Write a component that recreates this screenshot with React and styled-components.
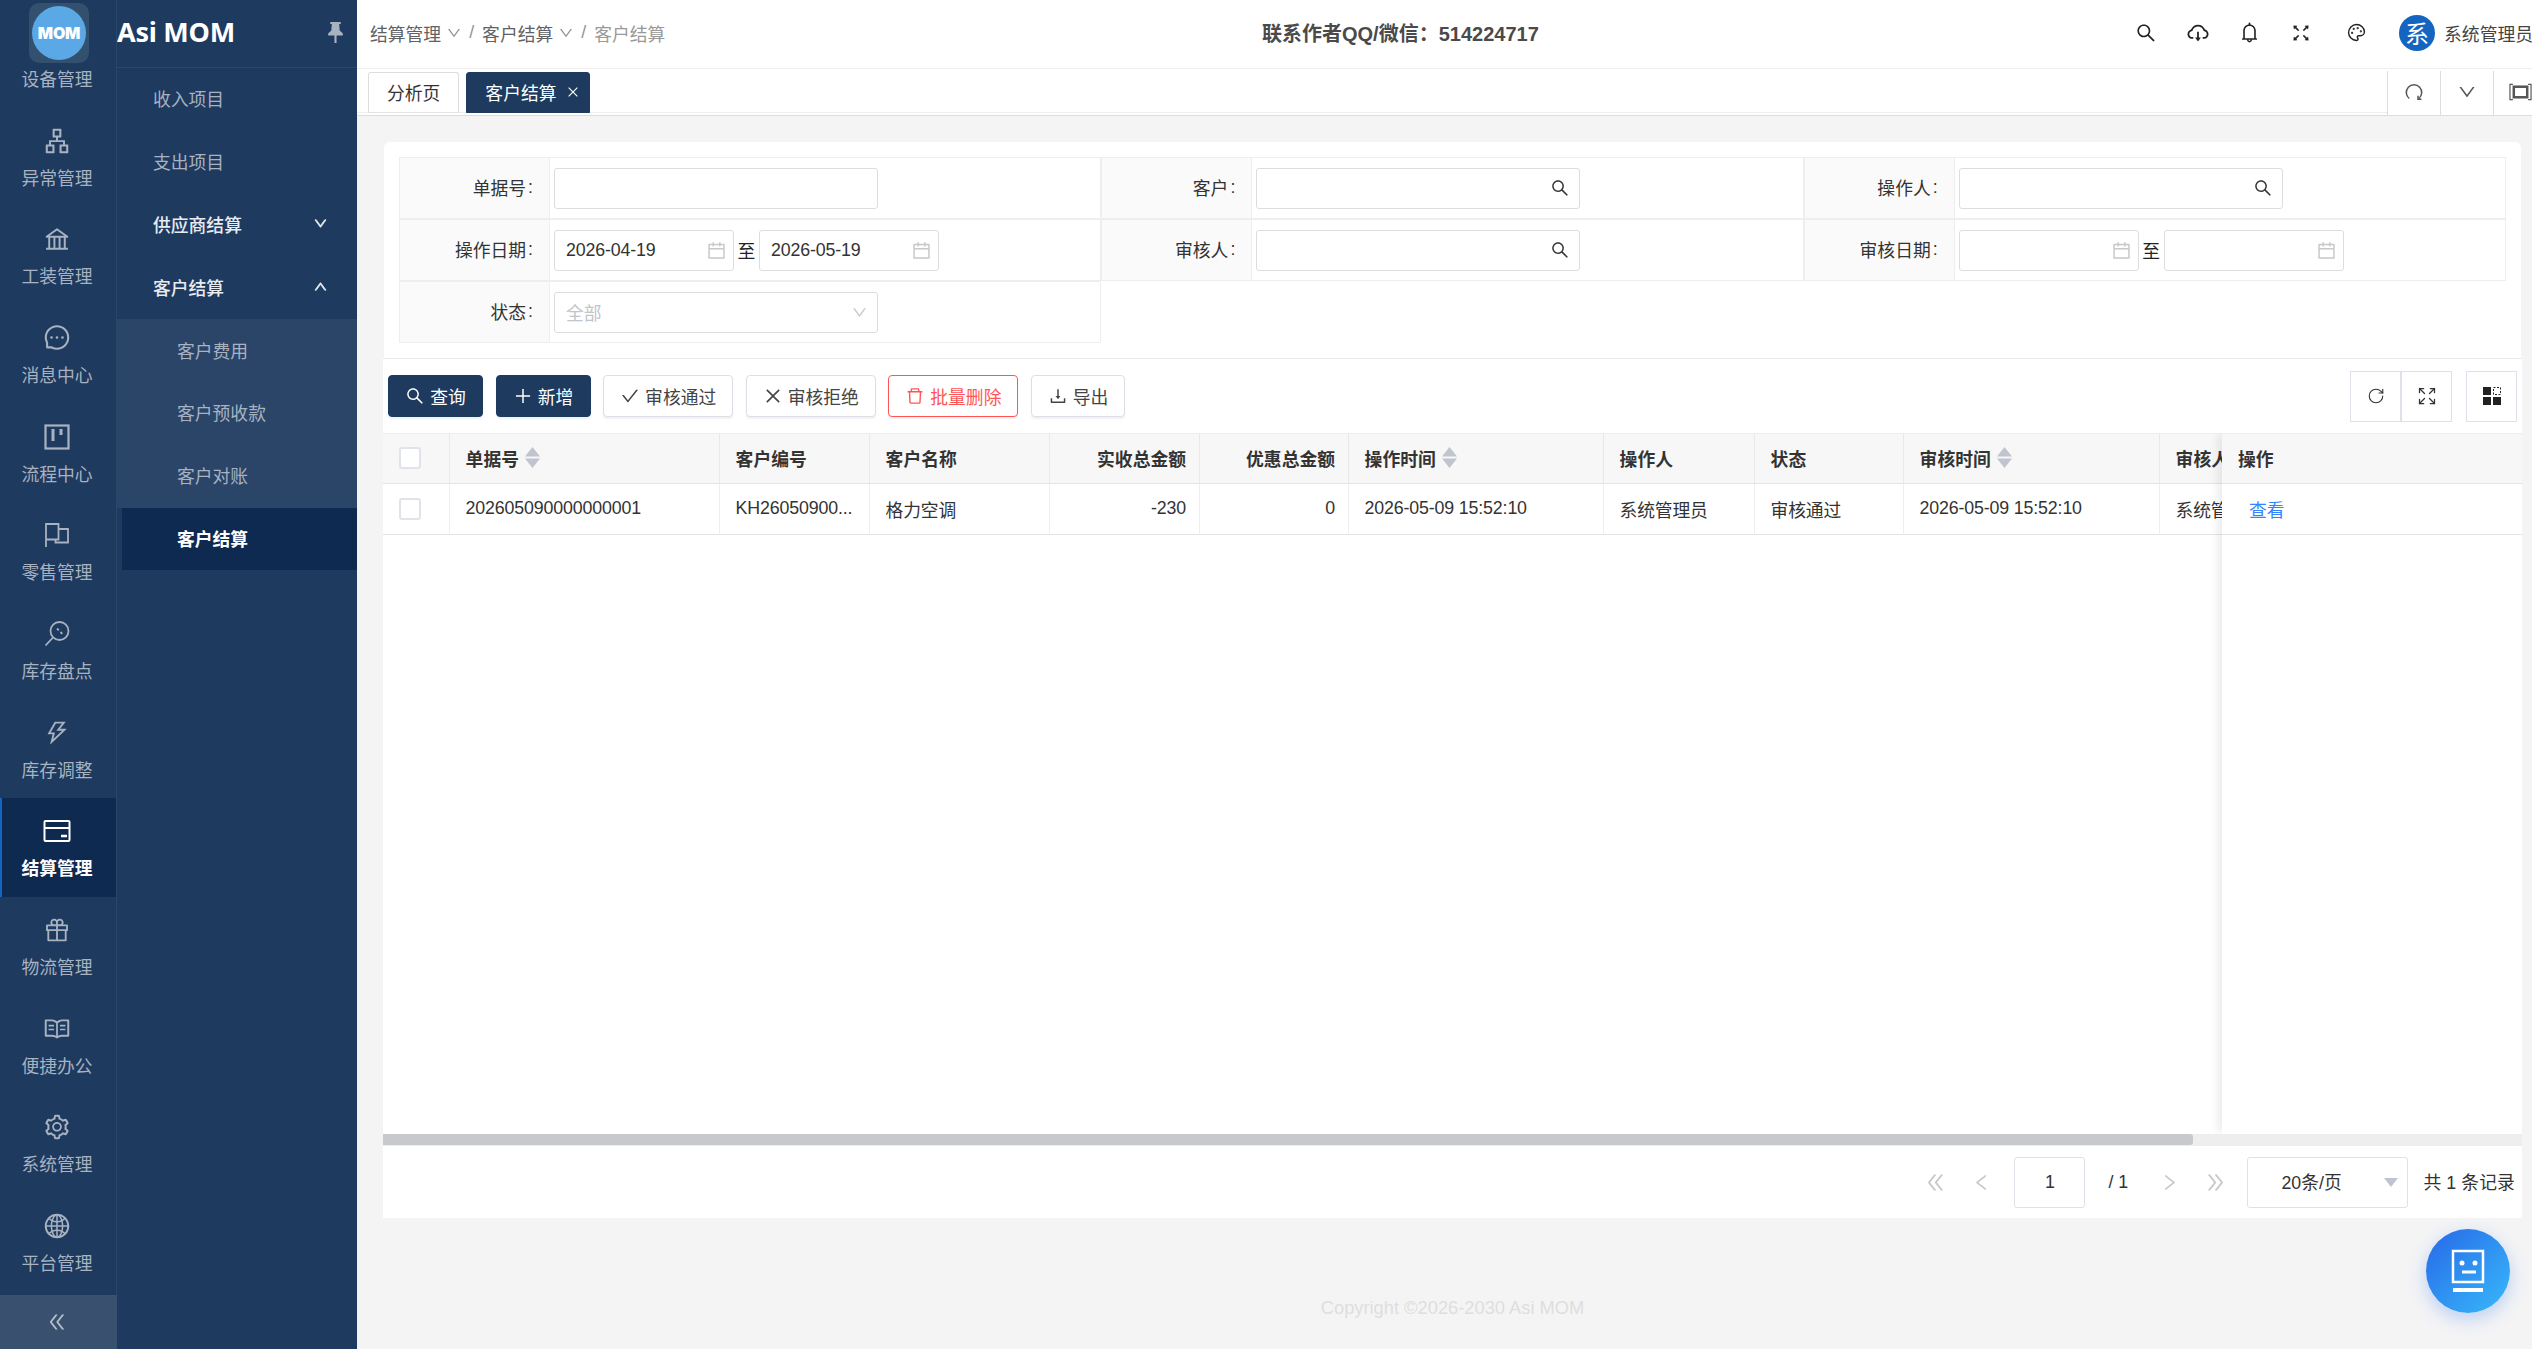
import React from 'react';
import styled, { createGlobalStyle } from 'styled-components';
import {
  AiOutlineApartment, AiOutlineBank, AiOutlineMessage, AiOutlineThunderbolt, AiOutlineGift, AiOutlineRead,
  AiOutlineSetting, AiOutlineGlobal, AiOutlineDoubleLeft, AiOutlineDoubleRight, AiOutlineDown, AiOutlineUp,
  AiOutlineSearch, AiOutlineCloudDownload, AiOutlineBell, AiOutlineFullscreen, AiOutlineCalendar, AiOutlineClose,
  AiOutlineCheck, AiOutlinePlus, AiOutlineDelete, AiOutlineDownload, AiOutlineLeft, AiOutlineRight,
} from 'react-icons/ai';
import { Palette, Expand, RotateCw } from 'lucide-react';

const Global = createGlobalStyle`
  html, body { margin: 0; padding: 0; height: 100%; overflow: hidden; }
  body { font-family: "Liberation Sans", "Noto Sans CJK SC", sans-serif; font-size: 17.8px; color: #333; }
  * { box-sizing: border-box; }
`;

const Page = styled.div`
  display: flex; width: 2532px; height: 1349px; overflow: hidden; position: relative; background: #f4f4f5;
`;

/* ---------- sidebar ---------- */
const Sidebar = styled.aside`
  flex: 0 0 357px; display: flex; background: #1e3a5f; position: relative;
`;
const Rail = styled.nav`
  flex: 0 0 117px; display: flex; flex-direction: column; padding-top: 9px; position: relative;
  border-right: 1px solid #2a4669;
`;
const LogoBox = styled.div`
  position: absolute; left: 29px; top: 3px; width: 60px; height: 60px; border-radius: 10px;
  background: #34506f; display: flex; align-items: center; justify-content: center; z-index: 2;
`;
const LogoCircle = styled.div`
  width: 54px; height: 54px; border-radius: 50%; background: #5aa9e6; color: #fff;
  display: flex; align-items: center; justify-content: center;
  font-family: Inter, sans-serif; font-weight: 900; font-size: 16px; letter-spacing: -0.2px;
`;
const RailItem = styled.div`
  height: 98.67px; flex: 0 0 98.67px; display: flex; flex-direction: column; align-items: center; padding-top: 19px;
  color: ${p => (p.$active ? '#fff' : '#a8b2c0')};
  font-weight: ${p => (p.$active ? 700 : 400)};
  background: ${p => (p.$active ? '#0f2a50' : 'transparent')};
  border-left: 2px solid ${p => (p.$active ? '#1565c0' : 'transparent')};
`;
const RailIcon = styled.div`
  width: 28px; height: 28px; display: flex; align-items: center; justify-content: center; margin-left: -4px;
`;
const RailLabel = styled.div`
  margin-top: 12px; line-height: 24px; white-space: nowrap; margin-left: -4px;
`;
const Collapse = styled.div`
  position: absolute; left: 0; bottom: 0; width: 117px; height: 54px; background: #3a506f; color: #b6c0cc;
  display: flex; align-items: center; justify-content: center; padding-right: 3px;
`;
const SubPanel = styled.div`
  flex: 1; display: flex; flex-direction: column; min-width: 0;
`;
const SubHead = styled.div`
  height: 68px; flex: 0 0 68px; display: flex; align-items: center; justify-content: space-between;
  padding: 0 14px 0 0; border-bottom: 1px solid #2a4669; color: #fff;
`;
const Brand = styled.div`
  font-size: 27px; font-weight: 700; line-height: 1; margin-top: -4px; color: #fff; font-family: "Noto Sans", sans-serif; letter-spacing: -0.25px;
`;
const PinIcon = styled.div`
  color: #a8b2c0; display: flex; margin-top: -2px;
`;
const SubItem = styled.div`
  height: 62.8px; flex: 0 0 62.8px; display: flex; align-items: center; justify-content: space-between; padding-right: 29px; padding-bottom: 2px;
  padding-left: ${p => (p.$level === 2 ? (p.$active ? 55 : 60) : 36)}px;
  margin-left: ${p => (p.$active ? 5 : 0)}px;
  color: ${p => (p.$active ? '#fff' : p.$open ? '#e8ebf0' : '#a8b2c0')};
  font-weight: ${p => (p.$active ? 700 : p.$open ? 500 : 400)};
  background: ${p => (p.$active ? '#0f2a50' : p.$level === 2 ? '#2b4569' : 'transparent')};
`;

/* ---------- main ---------- */
const Main = styled.main`
  flex: 1; min-width: 0; display: flex; flex-direction: column; height: 1349px; overflow: hidden;
`;
const Header = styled.header`
  flex: 0 0 69px; height: 69px; background: #fff; border-bottom: 1px solid #eee; display: flex; align-items: center; overflow: hidden;
  padding-left: 13px; padding-bottom: 3px;
`;
const Crumbs = styled.div`
  flex: 0 0 892px; display: flex; align-items: center; color: #606266; white-space: nowrap;
`;
const CrumbChevron = styled.span`
  display: inline-flex; margin: 0 7px 0 5px; color: #909399;
`;
const CrumbSep = styled.span`
  margin-right: 8px; color: #909399;
`;
const CrumbLast = styled.span`color: #999;`;
const Notice = styled.div`
  font-weight: 700; font-size: 20px; color: #4a4a4a; white-space: nowrap;
`;
const HeadTools = styled.div`
  margin-left: auto; display: flex; align-items: center;
`;
const HeadIcon = styled.div`
  width: 51.5px; height: 30px; display: flex; align-items: center; justify-content: center; color: #222;
  margin-right: ${p => p.$mr || 0}px;
`;
const Avatar = styled.div`
  width: 36px; height: 36px; border-radius: 50%; background: #1565c0; color: #fff; font-size: 24px;
  display: flex; align-items: center; justify-content: center; margin-left: 17px; margin-right: 9px; flex: none;
`;
const UserName = styled.div`color: #444; white-space: nowrap; margin-right: -1px;`;

const TabBar = styled.div`
  flex: 0 0 47px; height: 47px; background: #fff; border-bottom: 1px solid #ddd; display: flex;
`;
const TabStrip = styled.div`
  flex: 1; display: flex; gap: 7px; padding: 3px 0 0 11px; border-bottom: 1px solid #eee; height: 44px;
`;
const Tab = styled.div`
  height: 41px; display: flex; align-items: center; gap: 9px; padding: ${p => (p.$active ? '0 9px 2px 18px' : '0 18px 2px')};
  border: 1px solid ${p => (p.$active ? '#1e3a5f' : '#ddd')}; border-bottom-color: ${p => (p.$active ? '#1e3a5f' : '#e4e4e4')};
  border-radius: 3px 3px 0 0;
  background: ${p => (p.$active ? '#1e3a5f' : '#fff')}; color: ${p => (p.$active ? '#fff' : '#333')};
`;
const TabTool = styled.div`
  margin-top: 2px; border-left: 1px solid #ddd; display: flex; align-items: center; justify-content: ${p => (p.$start ? 'flex-start' : 'center')};
  padding-left: ${p => (p.$start ? 15 : 0)}px; color: #555; padding-bottom: 2px; overflow: hidden;
  flex: 0 0 ${p => p.$w || 53}px;
`;

const Content = styled.div`
  flex: 1; display: flex; flex-direction: column; padding: 26px 10px 0 26px; min-height: 0; background: #f4f4f5;
`;
const SearchCard = styled.section`
  flex: 0 0 216px; margin: 0 1px 0 1px; background: #fff; border-radius: 6px 6px 0 0; border-bottom: 1px solid #e8e8e8; padding: 15px;
`;
const FormGrid = styled.div`
  display: grid; grid-template-columns: repeat(3, 1fr); grid-auto-rows: 62px;
`;
const Field = styled.div`
  display: grid; grid-template-columns: 150px 1fr; border: 1px solid #eee;
`;
const FieldLabel = styled.div`
  background: #fafafa; border-right: 1px solid #eee; display: flex; align-items: center; justify-content: flex-end; padding: 0 16px 2px 0; color: #333;
`;
const Colon = styled.span`margin-left: 2px;`;
const FieldValue = styled.div`
  display: flex; align-items: center; padding-left: 4px;
`;
const InputBox = styled.div`
  width: ${p => p.$w || 324}px; height: 41px; border: 1px solid #ddd; border-radius: 3px; background: #fff; display: flex; align-items: center;
  justify-content: space-between; padding: 0 9px 0 11px; color: ${p => (p.$muted ? '#c0c4cc' : '#333')}; flex: none; letter-spacing: -0.15px;
`;
const FieldIcon = styled.span`
  display: inline-flex; color: ${p => p.$c || '#c8c8c8'}; margin-right: ${p => p.$mr || 0}px;
`;
const To = styled.span`
  width: 25px; text-align: center; flex: none; color: #222; padding-bottom: 1px;
`;

const TableCard = styled.section`
  flex: 0 0 859px; background: #fff; display: flex; flex-direction: column;
`;
const Toolbar = styled.div`
  flex: 0 0 74px; display: flex; align-items: center; padding: 0 5px 0 5px;
`;
const Btn = styled.div`
  width: ${p => p.$w}px; height: 42px; border-radius: 4px; display: flex; align-items: center; justify-content: center; gap: 5px; margin-right: 12.6px; padding-bottom: 1px;
  background: ${p => (p.$primary ? '#1e3a5f' : '#fff')};
  color: ${p => (p.$primary ? '#fff' : p.$danger ? '#ff5558' : '#444')};
  border: 1px solid ${p => (p.$primary ? '#1e3a5f' : p.$danger ? '#ff5558' : '#dcdfe6')};
  box-shadow: 0 2px 2px ${p => (p.$primary ? 'rgba(64,158,255,.12)' : 'rgba(0,0,0,.06)')};
`;
const Tools = styled.div`
  margin-left: auto; display: flex;
`;
const ToolBtn = styled.div`
  width: 51px; height: 51px; border: 1px solid #dfe1ea; display: flex; align-items: center; justify-content: center; color: #333;
  margin-left: ${p => p.$ml || 0}px;
`;
const TableArea = styled.div`
  flex: 1; min-height: 0; position: relative; overflow: hidden;
`;
const Table = styled.table`
  border-collapse: separate; border-spacing: 0; table-layout: fixed; width: 2460px;
`;
const Col = styled.col`width: ${p => p.$w}px;`;
const Th = styled.th`
  height: 51px; padding: 0 13px 2px 15.6px; background: #f7f7f7; border-top: 1px solid #eee; border-right: 1px solid #e9e9e9; border-bottom: 1px solid #e4e4e4;
  text-align: ${p => p.$align || 'left'}; font-weight: 700; color: #333; white-space: nowrap; overflow: hidden;
`;
const Td = styled.td`
  height: 51px; padding: 0 13px 1px 15.6px; border-right: 1px solid #eee; border-bottom: 1px solid #e4e4e4; color: #333;
  text-align: ${p => p.$align || 'left'}; white-space: nowrap; overflow: hidden; letter-spacing: -0.15px;
`;
const Check = styled.span`
  display: block; width: 22px; height: 22px; border: 2px solid #e0e3ea; border-radius: 3px; background: #fff; margin-bottom: -1px;
`;
const HeadWrap = styled.span`
  display: inline-flex; align-items: center; gap: 6px;
`;
const FixedCol = styled.div`
  position: absolute; top: 0; right: 0; bottom: 0; width: 300px; background: #fff; box-shadow: -7px 0 8px -2px rgba(0,0,0,.07);
`;
const FixedHead = styled.div`
  height: 51px; background: #f7f7f7; border-top: 1px solid #eee; border-bottom: 1px solid #e4e4e4; display: flex; align-items: center; padding: 0 0 2px 16px; font-weight: 700; color: #333;
`;
const FixedCell = styled.div`
  height: 51px; border-bottom: 1px solid #e4e4e4; display: flex; align-items: center; padding: 0 0 1px 27px; color: #3385ff;
`;
const ScrollTrack = styled.div`
  flex: 0 0 11px; background: #eee; display: flex;
`;
const ScrollThumb = styled.div`
  width: 1810px; background: #c8c9cc; border-radius: 0 3px 3px 0;
`;
const Pager = styled.div`
  flex: 0 0 73px; border-top: 1px solid #eee; display: flex; align-items: center; justify-content: flex-end; padding-right: 7px; color: #333;
`;
const PageArrow = styled.span`
  width: 46px; display: flex; justify-content: center; color: #c8c8c8;
`;
const PageInput = styled.div`
  width: 71px; height: 51px; border: 1px solid #dfe1ea; border-radius: 3px; display: flex; align-items: center; justify-content: center; margin-left: 10px;
`;
const PageTotal = styled.span`
  width: 20px; margin: 0 18px 0 23px; white-space: nowrap;
`;
const PageSelect = styled.div`
  width: 161px; height: 51px; border: 1px solid #dfe1ea; border-radius: 3px; display: flex; align-items: center; padding: 0 0 2px 33px; position: relative; margin-left: 9px;
`;
const Caret = styled.span`
  position: absolute; right: 9px; top: 20px; width: 0; height: 0; border-left: 7px solid transparent; border-right: 7px solid transparent; border-top: 9px solid #c0c4cf;
`;
const PageCount = styled.span`
  margin: 0 0 2px 15px; white-space: nowrap; letter-spacing: 0.1px;
`;
const Footer = styled.footer`
  flex: 1; padding-top: 78px; line-height: 24px; text-align: center; color: #dedede; font-size: 18.3px;
`;
const FloatBtn = styled.div`
  position: absolute; right: 22px; bottom: 36px; width: 84px; height: 84px; border-radius: 50%;
  background: linear-gradient(135deg, #2768e8, #38bafa); box-shadow: 0 6px 18px rgba(50,120,240,.3);
  display: flex; align-items: center; justify-content: center; z-index: 5;
`;

/* ---------- drawn icons ---------- */
const line = { fill: 'none', stroke: 'currentColor', strokeWidth: 1.8 };
const FlagIcon = () => (
  <svg width="26" height="26" viewBox="0 0 26 26" {...line}><path d="M2 25V2h12.500v15.500H2" /><path d="M14.500 7H24v13.500H11.500v-3" /></svg>
);
const ProjectIcon = () => (
  <svg width="26" height="26" viewBox="0 0 26 26" {...line}><rect x="1.500" y="1.500" width="23" height="23" strokeWidth="2.200" /><path d="M9 5v12M17 5v6" strokeWidth="3" /></svg>
);
const ScanIcon = () => (
  <svg width="26" height="26" viewBox="0 0 26 26" {...line}><circle cx="15.500" cy="10" r="9" /><path d="M9 16.500L1.500 24.500" /><path d="M13 7.500l1.800 1.800M16.500 11l1.800 1.800" /></svg>
);
const CardIcon = () => (
  <svg width="28" height="22" viewBox="0 0 28 22" fill="none" stroke="currentColor" strokeWidth="2"><rect x="1.500" y="1" width="25" height="20" rx="1" /><path d="M1.500 8h25" /><path d="M18 16h6" strokeWidth="2.500" /></svg>
);
const PinGlyph = () => (
  <svg width="15" height="21" viewBox="0 0 14 20" fill="currentColor"><path d="M2 0h10v1.800h-1.500L11 8l3 3v1.800H8V20H6v-7.200H0V11l3-3 .5-6.200H2z" /></svg>
);
const ArcReload = () => (
  <svg width="18" height="18" viewBox="0 0 18 18" fill="none" stroke="currentColor" strokeWidth="1.500"><path d="M4.200 15.500A7.700 7.700 0 1 1 13.800 15.500" /><path d="M13 12.800v3.400h3.400" /></svg>
);
const MaxIcon = () => (
  <svg width="24" height="18" viewBox="0 0 24 18" fill="none" stroke="currentColor" strokeWidth="1.200"><path d="M4 1H1v16h3M20 1h3v16h-3" /><rect x="5" y="3.500" width="14" height="11" strokeWidth="2.600" /></svg>
);
const GridIcon = () => (
  <svg width="18" height="18" viewBox="0 0 18 18"><path fill="#222" d="M0 0h8v8H0zM0 10h8v8H0zM10 10h8v8h-8z" /><rect x="10.500" y=".500" width="7" height="7" fill="none" stroke="#222" strokeDasharray="2 1.500" /></svg>
);
const SortIcon = () => (
  <svg width="15" height="21" viewBox="0 0 15 21"><path fill="#c0c4cf" d="M7.500 0L15 9.500H0zM0 11.500h15L7.500 21z" /></svg>
);
const BotIcon = () => (
  <svg width="36" height="44" viewBox="0 0 36 44" fill="none" stroke="#fff" strokeWidth="2.500"><rect x="3" y="2" width="30" height="31" /><path d="M3 41h30" strokeWidth="4" /><circle cx="12" cy="14" r="2.500" fill="#fff" stroke="none" /><circle cx="25" cy="14" r="2.500" fill="#fff" stroke="none" /><path d="M12 23h14" strokeWidth="3" /></svg>
);

const railItems = [
  ['设备管理', <AiOutlineSetting size={26} />],
  ['异常管理', <AiOutlineApartment size={28} />],
  ['工装管理', <AiOutlineBank size={28} />],
  ['消息中心', <AiOutlineMessage size={29} />],
  ['流程中心', <ProjectIcon />],
  ['零售管理', <FlagIcon />],
  ['库存盘点', <ScanIcon />],
  ['库存调整', <AiOutlineThunderbolt size={28} />],
  ['结算管理', <CardIcon />, true],
  ['物流管理', <AiOutlineGift size={28} />],
  ['便捷办公', <AiOutlineRead size={30} />],
  ['系统管理', <AiOutlineSetting size={30} />],
  ['平台管理', <AiOutlineGlobal size={30} />],
];

const columns = [
  { w: 67 }, { w: 270, t: '单据号', sort: true, v: '202605090000000001' },
  { w: 150, t: '客户编号', v: 'KH26050900...' }, { w: 180, t: '客户名称', v: '格力空调' },
  { w: 150, t: '实收总金额', v: '-230', a: 'right' }, { w: 149, t: '优惠总金额', v: '0', a: 'right' },
  { w: 255, t: '操作时间', sort: true, v: '2026-05-09 15:52:10' }, { w: 151, t: '操作人', v: '系统管理员' },
  { w: 149, t: '状态', v: '审核通过' }, { w: 256, t: '审核时间', sort: true, v: '2026-05-09 15:52:10' },
  { w: 150, t: '审核人', v: '系统管理' }, { w: 533 },
];

const Search = () => <FieldIcon $c="#333"><AiOutlineSearch size={20} /></FieldIcon>;
const Cal = () => <FieldIcon $mr={-3}><AiOutlineCalendar size={21} /></FieldIcon>;

const Chevron = ({ up }) => {
  const Icon = up ? AiOutlineUp : AiOutlineDown;
  return <Icon size={15} stroke="currentColor" strokeWidth={50} />;
};

export default function App() {
  return (
    <Page>
      <Global />
      <Sidebar>
        <Rail>
          <LogoBox><LogoCircle>MOM</LogoCircle></LogoBox>
          {railItems.map(([label, icon, active]) => (
            <RailItem key={label} $active={active}>
              <RailIcon>{icon}</RailIcon>
              <RailLabel>{label}</RailLabel>
            </RailItem>
          ))}
          <Collapse><AiOutlineDoubleLeft size={22} /></Collapse>
        </Rail>
        <SubPanel>
          <SubHead>
            <Brand>Asi MOM</Brand>
            <PinIcon><PinGlyph /></PinIcon>
          </SubHead>
          <SubItem>收入项目</SubItem>
          <SubItem>支出项目</SubItem>
          <SubItem $open>供应商结算<Chevron /></SubItem>
          <SubItem $open>客户结算<Chevron up /></SubItem>
          <SubItem $level={2}>客户费用</SubItem>
          <SubItem $level={2}>客户预收款</SubItem>
          <SubItem $level={2}>客户对账</SubItem>
          <SubItem $level={2} $active>客户结算</SubItem>
        </SubPanel>
      </Sidebar>

      <Main>
        <Header>
          <Crumbs>
            结算管理<CrumbChevron><AiOutlineDown size={16} /></CrumbChevron><CrumbSep>/</CrumbSep>
            客户结算<CrumbChevron><AiOutlineDown size={16} /></CrumbChevron><CrumbSep>/</CrumbSep>
            <CrumbLast>客户结算</CrumbLast>
          </Crumbs>
          <Notice>联系作者QQ/微信：514224717</Notice>
          <HeadTools>
            <HeadIcon><AiOutlineSearch size={22} /></HeadIcon>
            <HeadIcon><AiOutlineCloudDownload size={24} /></HeadIcon>
            <HeadIcon><AiOutlineBell size={23} /></HeadIcon>
            <HeadIcon $mr={4}><AiOutlineFullscreen size={22} /></HeadIcon>
            <HeadIcon><Palette size={19} strokeWidth={1.8} /></HeadIcon>
            <Avatar>系</Avatar>
            <UserName>系统管理员</UserName>
          </HeadTools>
        </Header>
        <TabBar>
          <TabStrip>
            <Tab>分析页</Tab>
            <Tab $active>客户结算<AiOutlineClose size={14} /></Tab>
          </TabStrip>
          <TabTool><ArcReload /></TabTool>
          <TabTool><AiOutlineDown size={20} /></TabTool>
          <TabTool $start $w={39}><MaxIcon /></TabTool>
        </TabBar>
        <Content>
          <SearchCard>
            <FormGrid>
              <Field><FieldLabel>单据号<Colon>:</Colon></FieldLabel><FieldValue><InputBox /></FieldValue></Field>
              <Field><FieldLabel>客户<Colon>:</Colon></FieldLabel><FieldValue><InputBox><span /><Search /></InputBox></FieldValue></Field>
              <Field><FieldLabel>操作人<Colon>:</Colon></FieldLabel><FieldValue><InputBox><span /><Search /></InputBox></FieldValue></Field>
              <Field><FieldLabel>操作日期<Colon>:</Colon></FieldLabel><FieldValue>
                <InputBox $w={180}>2026-04-19<Cal /></InputBox><To>至</To><InputBox $w={180}>2026-05-19<Cal /></InputBox>
              </FieldValue></Field>
              <Field><FieldLabel>审核人<Colon>:</Colon></FieldLabel><FieldValue><InputBox><span /><Search /></InputBox></FieldValue></Field>
              <Field><FieldLabel>审核日期<Colon>:</Colon></FieldLabel><FieldValue>
                <InputBox $w={180}><span /><Cal /></InputBox><To>至</To><InputBox $w={180}><span /><Cal /></InputBox>
              </FieldValue></Field>
              <Field><FieldLabel>状态<Colon>:</Colon></FieldLabel><FieldValue>
                <InputBox $muted>全部<FieldIcon><AiOutlineDown size={17} /></FieldIcon></InputBox>
              </FieldValue></Field>
            </FormGrid>
          </SearchCard>
          <TableCard>
            <Toolbar>
              <Btn $primary $w={95}><AiOutlineSearch size={20} />查询</Btn>
              <Btn $primary $w={95}><AiOutlinePlus size={20} />新增</Btn>
              <Btn $w={130}><AiOutlineCheck size={20} />审核通过</Btn>
              <Btn $w={130}><AiOutlineClose size={20} />审核拒绝</Btn>
              <Btn $danger $w={130}><AiOutlineDelete size={20} />批量删除</Btn>
              <Btn $w={94}><AiOutlineDownload size={20} />导出</Btn>
              <Tools>
                <ToolBtn><RotateCw size={18} strokeWidth={1.5} /></ToolBtn>
                <ToolBtn><Expand size={20} strokeWidth={1.5} /></ToolBtn>
                <ToolBtn $ml={14}><GridIcon /></ToolBtn>
              </Tools>
            </Toolbar>
            <TableArea>
              <Table>
                <colgroup>{columns.map((c, i) => <Col key={i} $w={c.w} />)}</colgroup>
                <thead>
                  <tr>
                    {columns.map((c, i) => (
                      <Th key={i} $align={c.a}>
                        {i === 0 ? <Check /> : c.sort ? <HeadWrap>{c.t}<SortIcon /></HeadWrap> : c.t}
                      </Th>
                    ))}
                  </tr>
                </thead>
                <tbody>
                  <tr>
                    {columns.map((c, i) => (
                      <Td key={i} $align={c.a}>{i === 0 ? <Check /> : c.v}</Td>
                    ))}
                  </tr>
                </tbody>
              </Table>
              <FixedCol>
                <FixedHead>操作</FixedHead>
                <FixedCell>查看</FixedCell>
              </FixedCol>
            </TableArea>
            <ScrollTrack><ScrollThumb /></ScrollTrack>
            <Pager>
              <PageArrow><AiOutlineDoubleLeft size={23} /></PageArrow>
              <PageArrow><AiOutlineLeft size={21} /></PageArrow>
              <PageInput>1</PageInput>
              <PageTotal>/ 1</PageTotal>
              <PageArrow><AiOutlineRight size={21} /></PageArrow>
              <PageArrow><AiOutlineDoubleRight size={23} /></PageArrow>
              <PageSelect>20条/页<Caret /></PageSelect>
              <PageCount>共 1 条记录</PageCount>
            </Pager>
          </TableCard>
          <Footer>Copyright ©2026-2030 Asi MOM</Footer>
        </Content>
      </Main>
      <FloatBtn><BotIcon /></FloatBtn>
    </Page>
  );
}
